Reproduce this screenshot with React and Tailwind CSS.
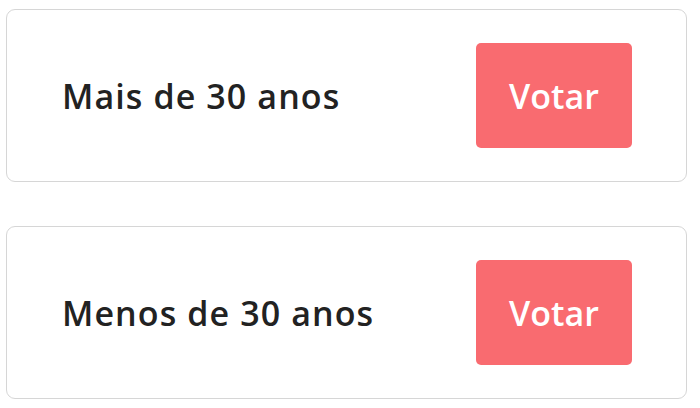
const OPTIONS = ['Mais de 30 anos', 'Menos de 30 anos'];

export default function App() {
    return (
        <div className="w-[700px] h-[408px] bg-white pt-[9px] pl-[6px] pr-[13px] flex flex-col gap-[44px]" style={{ fontFamily: '"Open Sans", Lato, sans-serif' }}>
            {OPTIONS.map(label => (
                <div key={label} className="h-[173px] border border-[#d6d6d6] rounded-[9px] flex items-center justify-between pl-[55px] pr-[54px]">
                    <span className="text-[34px] font-semibold text-[#222222] leading-none tracking-[1.1px]">{label}</span>
                    <button className="w-[156px] h-[105px] rounded-[5px] bg-[#f96b70] text-white text-[34px] font-semibold leading-none">
                        Votar
                    </button>
                </div>
            ))}
        </div>
    );
}
